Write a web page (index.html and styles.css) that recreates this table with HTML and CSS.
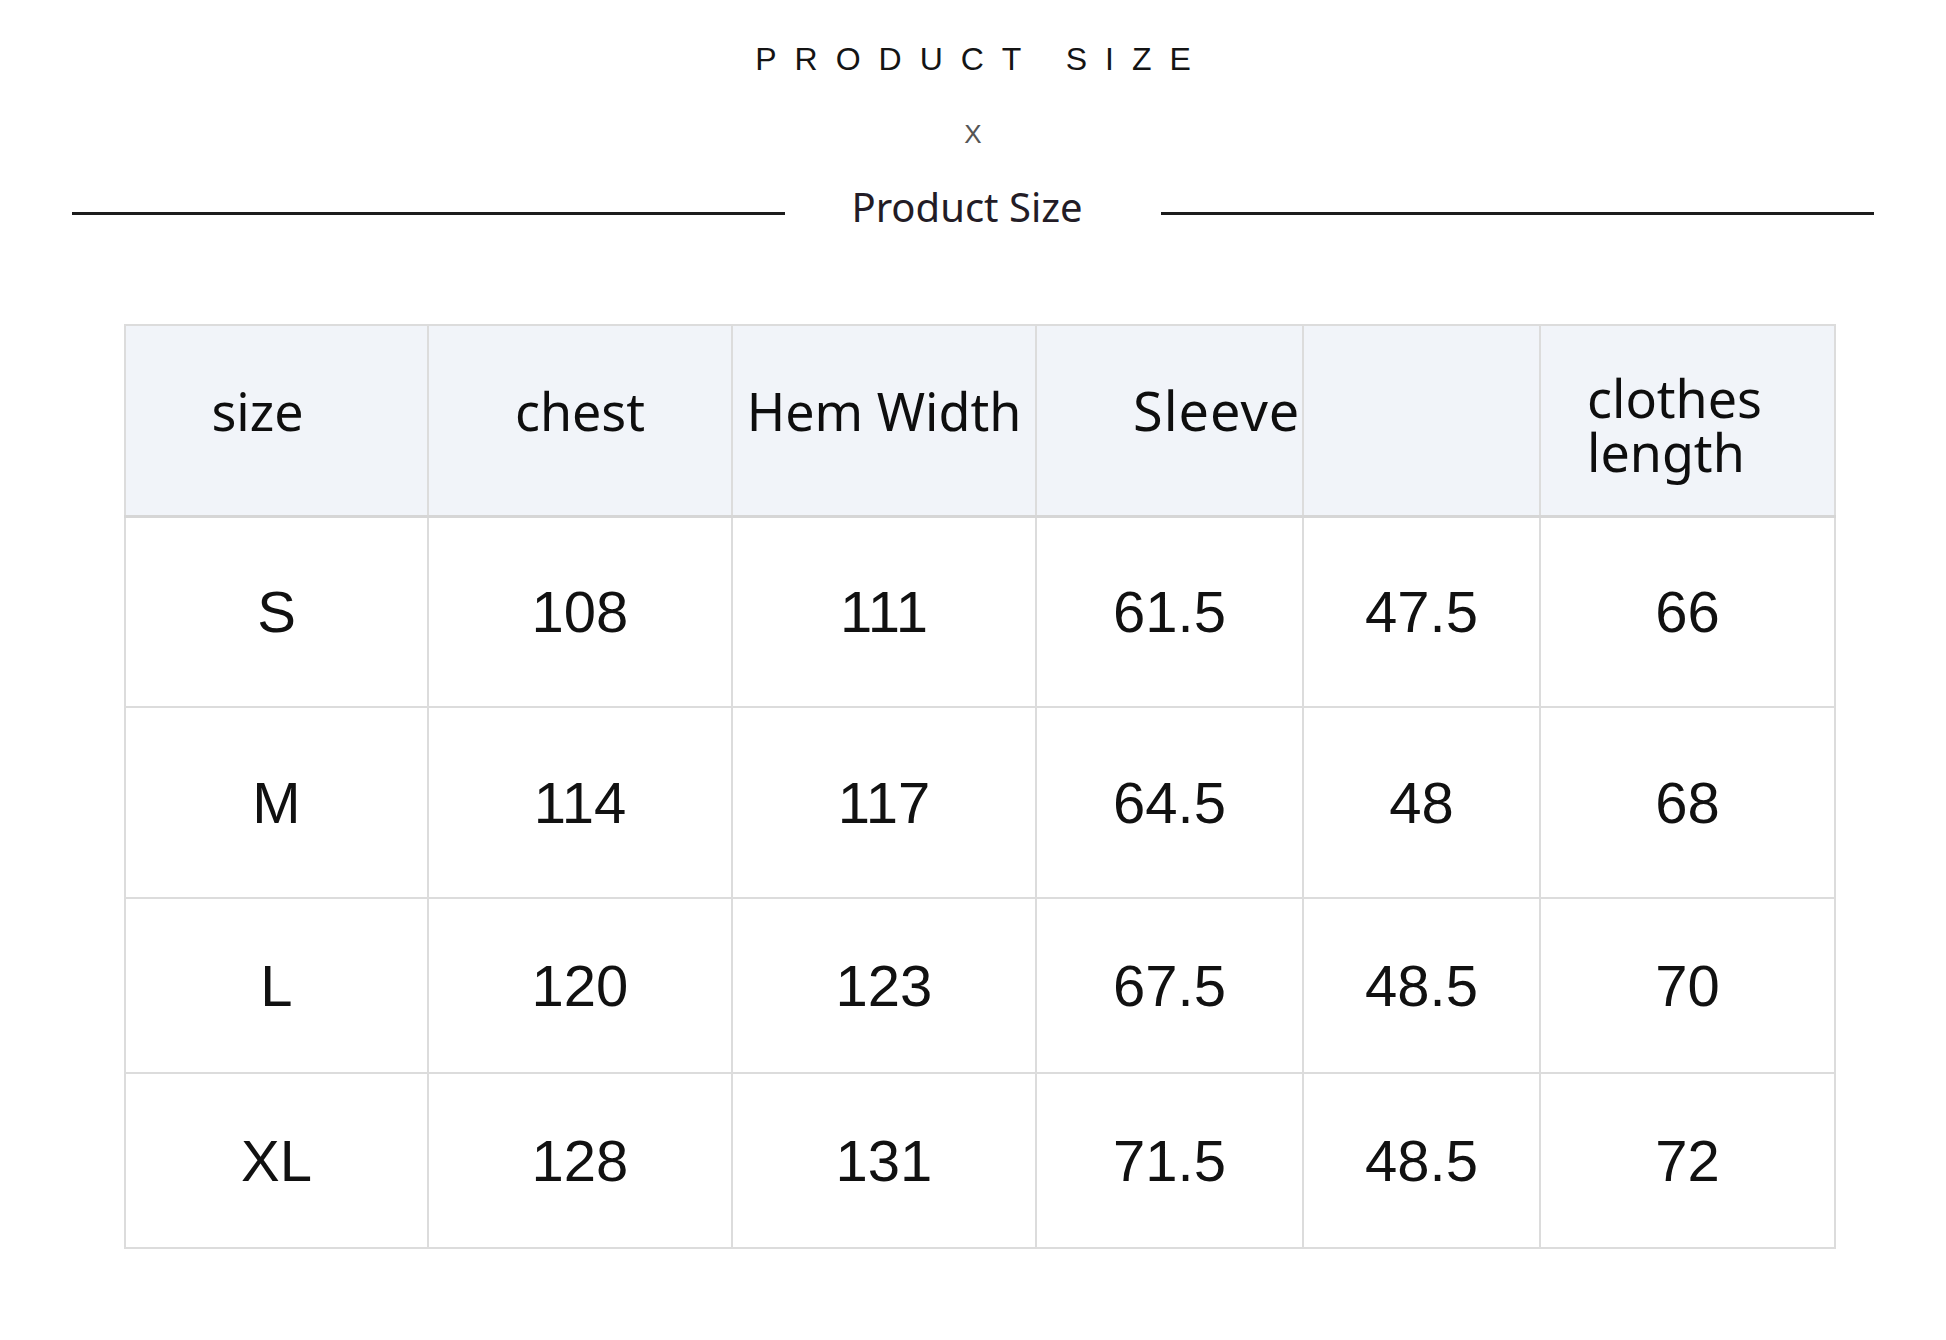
FILE: index.html
```html
<!DOCTYPE html>
<html lang="en">
<head>
  <meta charset="UTF-8">
  <meta name="viewport" content="width=device-width, initial-scale=1.0">
  <title>Product Size</title>
  <link rel="stylesheet" href="styles.css">
</head>
<body>
  <div class="page">
    <header class="heading">
      <div class="heading-caps">PRODUCT SIZE</div>
      <div class="heading-x">X</div>
      <div class="heading-row">
        <span class="rule"></span>
        <h2 class="heading-title">Product Size</h2>
        <span class="rule"></span>
      </div>
    </header>

    <table class="size-table">
      <colgroup>
        <col class="c1">
        <col class="c2">
        <col class="c3">
        <col class="c4">
        <col class="c5">
        <col class="c6">
      </colgroup>
      <thead>
        <tr>
          <th class="th-size">size</th>
          <th>chest</th>
          <th>Hem Width</th>
          <th class="th-sleeve">Sleeve</th>
          <th></th>
          <th class="th-length"><span class="th-line">clothes</span><span class="th-line">length</span></th>
        </tr>
      </thead>
      <tbody>
        <tr class="row-tall">
          <td>S</td><td>108</td><td>111</td><td>61.5</td><td>47.5</td><td>66</td>
        </tr>
        <tr class="row-tall">
          <td>M</td><td>114</td><td>117</td><td>64.5</td><td>48</td><td>68</td>
        </tr>
        <tr class="row-short">
          <td>L</td><td>120</td><td>123</td><td>67.5</td><td>48.5</td><td>70</td>
        </tr>
        <tr class="row-short">
          <td>XL</td><td>128</td><td>131</td><td>71.5</td><td>48.5</td><td>72</td>
        </tr>
      </tbody>
    </table>
  </div>
</body>
</html>
```

FILE: styles.css
```css
/* Reset */
* {
  margin: 0;
  padding: 0;
  box-sizing: border-box;
}
body {
  background: #fff;
  color: #111;
  font-family: 'Liberation Sans', Arial, sans-serif;
}

.page {
  width: 1946px;
  padding: 43px 72px 0;
}

/* Heading block */
.heading {
  display: flex;
  flex-direction: column;
  align-items: center;
}
.heading-caps {
  font-size: 32px;
  line-height: 32px;
  letter-spacing: 18px;
  margin-right: -18px;
  color: #141414;
}
.heading-x {
  margin-top: 46px;
  font-size: 26px;
  line-height: 26px;
  color: #555;
}
.heading-row {
  align-self: stretch;
  display: flex;
  align-items: flex-start;
  margin-top: 40px;
}
.rule {
  flex: 1;
  height: 3px;
  margin-top: 25px;
  background: #1c1c1c;
}
.heading-title {
  margin: 0 78px 0 66px;
  font-family: 'Noto Sans', sans-serif;
  font-size: 40px;
  line-height: 40px;
  font-weight: 400;
  color: #231c26;
}

/* Size table */
.size-table {
  margin: 97px 0 0 52px;
  width: 1710px;
  table-layout: fixed;
  border-collapse: collapse;
}
.c1 { width: 303px; }
.c2 { width: 304px; }
.c3 { width: 304px; }
.c4 { width: 267px; }
.c5 { width: 237px; }
.c6 { width: 295px; }

.size-table th,
.size-table td {
  border: 2px solid #dcdcdc;
  text-align: center;
  vertical-align: middle;
}
.size-table thead tr {
  height: 191px;
}
.size-table th {
  background: #f1f4f9;
  border-bottom: 3px solid #d6d6d6;
  padding-bottom: 20px;
  font-family: 'Noto Sans', sans-serif;
  font-size: 52px;
  font-weight: 400;
  color: #0e0e0e;
  white-space: nowrap;
}
.th-size {
  padding-right: 38px;
}
.th-sleeve {
  text-align: left !important;
  padding-left: 96px;
  font-size: 54px !important;
  letter-spacing: 1px;
}
.th-length {
  text-align: left !important;
  padding: 10px 0 0 46px !important;
}
.th-line {
  display: block;
  line-height: 54px;
}

.size-table td {
  font-size: 58px;
  color: #111;
}
.row-tall { height: 191px; }
.row-short { height: 175px; }
```
